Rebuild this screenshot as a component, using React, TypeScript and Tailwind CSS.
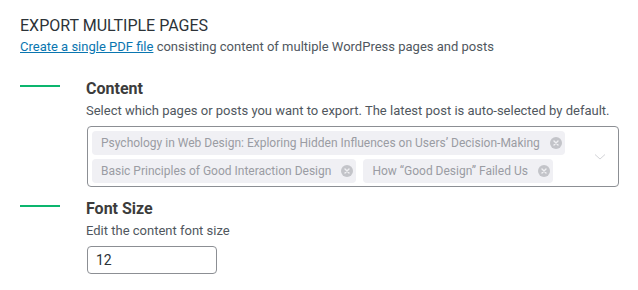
import * as React from "react"

const selectedPosts = [
  "Psychology in Web Design: Exploring Hidden Influences on Users’ Decision-Making",
  "Basic Principles of Good Interaction Design",
  "How “Good Design” Failed Us",
]

function RemoveIcon() {
  return (
    <svg width="12" height="12" viewBox="0 0 12 12" className="shrink-0">
      <circle cx="6" cy="6" r="6" fill="#c3c4c9" />
      <path d="M4 4 L8 8 M8 4 L4 8" stroke="#f0f0f3" strokeWidth="1.4" strokeLinecap="round" />
    </svg>
  )
}

function Section({ title, description, children }: { title: string; description: string; children: React.ReactNode }) {
  return (
    <div className="flex">
      <div className="mt-[8px] h-[2px] w-[40px] shrink-0 bg-[#0cb56e]" />
      <div className="ml-[26px] flex-1">
        <h3 className="text-[16px] font-bold leading-[24px] text-[#3c3c3c]">{title}</h3>
        <p className="mt-[1px] text-[13px] leading-[18px] text-[#50575e]">{description}</p>
        {children}
      </div>
    </div>
  )
}

export default function App() {
  return (
    <div className="h-[290px] w-[638px] bg-white pl-[20px] pt-[14px] font-['Roboto',sans-serif]">
      <h2 className="text-[16px] leading-[24px] text-[#2c3338]">EXPORT MULTIPLE PAGES</h2>
      <p className="text-[13px] leading-[18px] text-[#50575e]">
        <a href="#" className="text-[#0a76b0] underline">Create a single PDF file</a> consisting content of multiple WordPress pages and posts
      </p>

      <div className="mt-[21px]">
        <Section
          title="Content"
          description="Select which pages or posts you want to export. The latest post is auto-selected by default."
        >
          <div className="mt-[6px] mr-[19px] ml-[1px] flex items-center rounded-[4px] border border-[#8c8f94] pt-[4px] pb-[3px] pl-[4px] pr-[12px]">
            <div className="flex flex-1 flex-wrap gap-x-[7px] gap-y-[4px]">
              {selectedPosts.map((post) => (
                <span
                  key={post}
                  className="flex h-[24px] items-center gap-[10px] whitespace-nowrap rounded-[4px] bg-[#f0f0f4] pl-[9px] pr-[3px] text-[12px] text-[#9a9ca3]"
                >
                  {post}
                  <RemoveIcon />
                </span>
              ))}
            </div>
            <svg width="12" height="8" viewBox="0 0 12 8" className="shrink-0">
              <path d="M1 1.5 L6 6 L11 1.5" fill="none" stroke="#d3d4d8" strokeWidth="1" />
            </svg>
          </div>
        </Section>
      </div>

      <div className="mt-[10px]">
        <Section title="Font Size" description="Edit the content font size">
          <input
            defaultValue="12"
            className="mt-[6px] ml-[1px] h-[28px] w-[130px] rounded-[4px] border border-[#8c8f94] px-[8px] text-[14px] text-[#2c3338] outline-none"
          />
        </Section>
      </div>
    </div>
  )
}
